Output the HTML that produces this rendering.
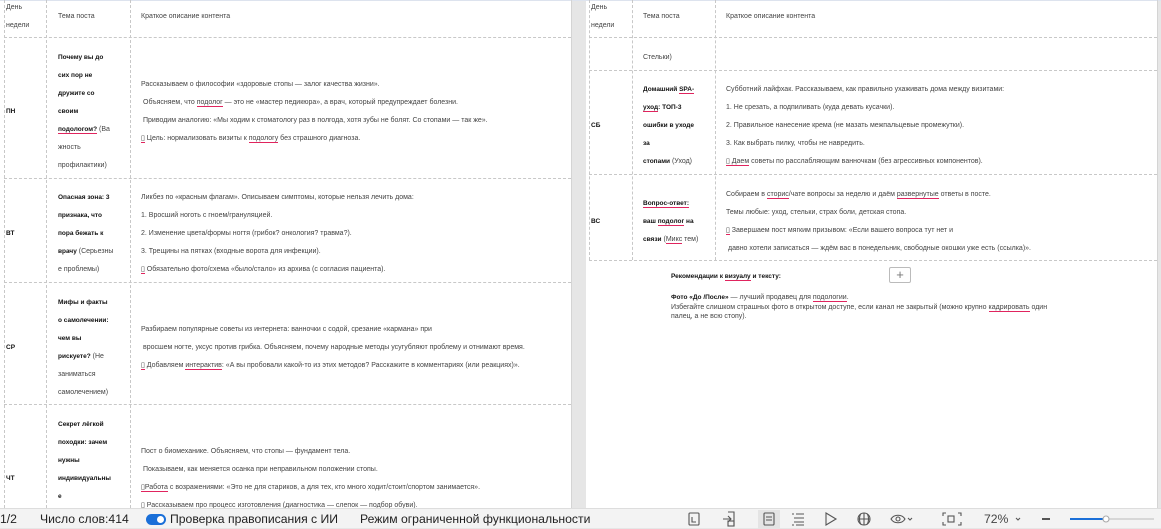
<!DOCTYPE html>
<html><head><meta charset="utf-8"><style>
*{margin:0;padding:0;box-sizing:border-box}
body{width:1161px;height:528px;overflow:hidden;background:#e6e6e6;position:relative;font-family:"Liberation Sans","DejaVu Sans",sans-serif}
.pg{position:absolute;top:0;background:#fff}
.t{position:absolute;font-size:7px;line-height:9px;white-space:nowrap;color:#444;transform:translateY(-4px)}
.b{font-weight:bold;color:#111;font-size:6.5px}
.t b{font-size:6.5px}
.h{position:absolute;border-top:1px dashed #c8c8c8;height:0}
.v{position:absolute;border-left:1px dashed #c8c8c8;width:0}
u{text-decoration:none;border-bottom:1.5px solid #e0245e}
.sb{position:absolute;left:0;top:508px;width:1161px;height:20px;background:#f3f3f3;border-top:1px solid #ddd;font-size:12.2px;color:#222}
.sb span{position:absolute;top:3px;white-space:nowrap}
</style></head><body>
<div class="pg" style="left:0;width:571px;height:508px"></div>
<div class="pg" style="left:586px;width:571px;height:508px"></div>
<div style="position:absolute;left:0;top:0;width:1161px;height:1px;background:#dde3ee"></div>

<div class="v" style="left:4px;top:0;height:508px"></div>
<div class="v" style="left:46px;top:0;height:508px"></div>
<div class="v" style="left:130px;top:0;height:508px"></div>
<div class="v" style="left:571px;top:0;height:508px;border-left:1px solid #d4d4d4"></div>
<div class="h" style="left:4px;top:37px;width:567px"></div>
<div class="h" style="left:4px;top:178px;width:567px"></div>
<div class="h" style="left:4px;top:282px;width:567px"></div>
<div class="h" style="left:4px;top:404px;width:567px"></div>

<div class="t" style="left:6px;top:7px">День</div>
<div class="t" style="left:6px;top:25px">недели</div>
<div class="t" style="left:58px;top:16px">Тема поста</div>
<div class="t" style="left:141px;top:16px">Краткое описание контента</div>

<div class="t b" style="left:6px;top:111px">ПН</div>
<div class="t b" style="left:58px;top:57px">Почему вы до</div>
<div class="t b" style="left:58px;top:75px">сих пор не</div>
<div class="t b" style="left:58px;top:93px">дружите со</div>
<div class="t b" style="left:58px;top:111px">своим</div>
<div class="t" style="left:58px;top:129px"><b style="color:#111"><u>подологом?</u></b> (Ва</div>
<div class="t" style="left:58px;top:147px">жность</div>
<div class="t" style="left:58px;top:165px">профилактики)</div>
<div class="t" style="left:141px;top:84px">Рассказываем о философии «здоровые стопы — залог качества жизни».</div>
<div class="t" style="left:143px;top:102px">Объясняем, что <u>подолог</u> — это не «мастер педикюра», а врач, который предупреждает болезни.</div>
<div class="t" style="left:143px;top:120px">Приводим аналогию: «Мы ходим к стоматологу раз в полгода, хотя зубы не болят. Со стопами — так же».</div>
<div class="t" style="left:141px;top:138px"><u>▯</u> Цель: нормализовать визиты к <u>подологу</u> без страшного диагноза.</div>

<div class="t b" style="left:6px;top:233px">ВТ</div>
<div class="t b" style="left:58px;top:197px">Опасная зона: 3</div>
<div class="t b" style="left:58px;top:215px">признака, что</div>
<div class="t b" style="left:58px;top:233px">пора бежать к</div>
<div class="t" style="left:58px;top:251px"><b style="color:#111">врачу</b> (Серьезны</div>
<div class="t" style="left:58px;top:269px">е проблемы)</div>
<div class="t" style="left:141px;top:197px">Ликбез по «красным флагам». Описываем симптомы, которые нельзя лечить дома:</div>
<div class="t" style="left:141px;top:215px">1. Вросший ноготь с гноем/грануляцией.</div>
<div class="t" style="left:141px;top:233px">2. Изменение цвета/формы ногтя (грибок? онкология? травма?).</div>
<div class="t" style="left:141px;top:251px">3. Трещины на пятках (входные ворота для инфекции).</div>
<div class="t" style="left:141px;top:269px"><u>▯</u> Обязательно фото/схема «было/стало» из архива (с согласия пациента).</div>

<div class="t b" style="left:6px;top:347px">СР</div>
<div class="t b" style="left:58px;top:302px">Мифы и факты</div>
<div class="t b" style="left:58px;top:320px">о самолечении:</div>
<div class="t b" style="left:58px;top:338px">чем вы</div>
<div class="t" style="left:58px;top:356px"><b style="color:#111">рискуете?</b> (Не</div>
<div class="t" style="left:58px;top:374px">заниматься</div>
<div class="t" style="left:58px;top:392px">самолечением)</div>
<div class="t" style="left:141px;top:329px">Разбираем популярные советы из интернета: ванночки с содой, срезание «кармана» при</div>
<div class="t" style="left:143px;top:347px">вросшем ногте, уксус против грибка. Объясняем, почему народные методы усугубляют проблему и отнимают время.</div>
<div class="t" style="left:141px;top:365px"><u>▯</u> Добавляем <u>интерактив</u>: «А вы пробовали какой-то из этих методов? Расскажите в комментариях (или реакциях)».</div>

<div class="t b" style="left:6px;top:478px">ЧТ</div>
<div class="t b" style="left:58px;top:424px">Секрет лёгкой</div>
<div class="t b" style="left:58px;top:442px">походки: зачем</div>
<div class="t b" style="left:58px;top:460px">нужны</div>
<div class="t b" style="left:58px;top:478px">индивидуальны</div>
<div class="t b" style="left:58px;top:496px">е</div>
<div class="t" style="left:141px;top:451px">Пост о биомеханике. Объясняем, что стопы — фундамент тела.</div>
<div class="t" style="left:143px;top:469px">Показываем, как меняется осанка при неправильном положении стопы.</div>
<div class="t" style="left:141px;top:487px"><u>▯Работа</u> с возражениями: «Это не для стариков, а для тех, кто много ходит/стоит/спортом занимается».</div>
<div class="t" style="left:141px;top:505px">▯ Рассказываем про процесс изготовления (диагностика — слепок — подбор обуви).</div>

<div class="v" style="left:589px;top:0;height:260px"></div>
<div class="v" style="left:632px;top:0;height:260px"></div>
<div class="v" style="left:715px;top:0;height:260px"></div>
<div class="v" style="left:1157px;top:0;height:508px;border-left:1px solid #d4d4d4"></div>
<div class="h" style="left:589px;top:37px;width:568px"></div>
<div class="h" style="left:589px;top:70px;width:568px"></div>
<div class="h" style="left:589px;top:174px;width:568px"></div>
<div class="h" style="left:589px;top:260px;width:568px"></div>

<div class="t" style="left:591px;top:7px">День</div>
<div class="t" style="left:591px;top:25px">недели</div>
<div class="t" style="left:643px;top:16px">Тема поста</div>
<div class="t" style="left:726px;top:16px">Краткое описание контента</div>
<div class="t" style="left:643px;top:57px">Стельки)</div>

<div class="t b" style="left:591px;top:125px">СБ</div>
<div class="t b" style="left:643px;top:89px">Домашний <u>SPA-</u></div>
<div class="t b" style="left:643px;top:107px"><u>уход</u>: ТОП-3</div>
<div class="t b" style="left:643px;top:125px">ошибки в уходе</div>
<div class="t b" style="left:643px;top:143px">за</div>
<div class="t" style="left:643px;top:161px"><b style="color:#111">стопами</b> (Уход)</div>
<div class="t" style="left:726px;top:89px">Субботний лайфхак. Рассказываем, как правильно ухаживать дома между визитами:</div>
<div class="t" style="left:726px;top:107px">1. Не срезать, а подпиливать (куда девать кусачки).</div>
<div class="t" style="left:726px;top:125px">2. Правильное нанесение крема (не мазать межпальцевые промежутки).</div>
<div class="t" style="left:726px;top:143px">3. Как выбрать пилку, чтобы не навредить.</div>
<div class="t" style="left:726px;top:161px"><u>▯ Даем</u> советы по расслабляющим ванночкам (без агрессивных компонентов).</div>

<div class="t b" style="left:591px;top:221px">ВС</div>
<div class="t b" style="left:643px;top:203px"><u>Вопрос-ответ:</u></div>
<div class="t b" style="left:643px;top:221px">ваш <u>подолог</u> на</div>
<div class="t" style="left:643px;top:239px"><b style="color:#111">связи</b> (<u>Микс</u> тем)</div>
<div class="t" style="left:726px;top:194px">Собираем в <u>сторис</u>/чате вопросы за неделю и даём <u>развернутые</u> ответы в посте.</div>
<div class="t" style="left:726px;top:212px">Темы любые: уход, стельки, страх боли, детская стопа.</div>
<div class="t" style="left:726px;top:230px"><u>▯</u> Завершаем пост мягким призывом: «Если вашего вопроса тут нет и</div>
<div class="t" style="left:728px;top:248px">давно хотели записаться — ждём вас в понедельник, свободные окошки уже есть (ссылка)».</div>

<div class="t b" style="left:671px;top:276px">Рекомендации к <u>визуалу</u> и тексту:</div>
<div style="position:absolute;left:889px;top:267px;width:22px;height:16px;border:1px solid #bbb;border-radius:2px;background:#fff;font-size:13px;line-height:13px;text-align:center;color:#777">+</div>
<div class="t" style="left:671px;top:297px"><b style="color:#111">Фото «До /После»</b> — лучший продавец для <u>подологии</u>.</div>
<div class="t" style="left:671px;top:307px">Избегайте слишком страшных фото в открытом доступе, если канал не закрытый (можно крупно <u>кадрировать</u> один</div>
<div class="t" style="left:671px;top:316px">палец, а не всю стопу).</div>

<div class="sb">
<span style="left:0">1/2</span>
<span style="left:40px">Число слов:414</span>
<div style="position:absolute;left:146px;top:5px;width:20px;height:11px;border-radius:6px;background:#1a6fd8"><div style="position:absolute;right:2px;top:2px;width:7px;height:7px;border-radius:50%;background:#fff"></div></div>
<span style="left:170px">Проверка правописания с ИИ</span>
<span style="left:360px">Режим ограниченной функциональности</span>
<svg style="position:absolute;left:680px;top:0" width="481" height="20" viewBox="0 0 481 20" fill="none" stroke="#555" stroke-width="1.1">
<rect x="9" y="4" width="10" height="12" rx="1"/><path d="M12 8v5h4"/>
<path d="M48 3h6v14h-6M43 10h8M48 7l3 3-3 3"/><rect x="48" y="12" width="6" height="5"/>
<rect x="78" y="1" width="22" height="19" fill="#e4e4e4" stroke="none"/>
<rect x="84" y="4" width="10" height="12" rx="1"/><path d="M86 8h6M86 11h6"/>
<path d="M112 5h2M116 5h8M114 9h10M114 13h10M112 16h2M116 16h8"/>
<path d="M146 4l10 6-10 6z"/>
<circle cx="184" cy="10" r="6"/><path d="M178 10h12M184 4v12M181 4.5c-2 3-2 8 0 11M187 4.5c2 3 2 8 0 11"/>
<path d="M211 10c3-5 11-5 14 0c-3 5-11 5-14 0z"/><circle cx="218" cy="10" r="2"/><path d="M228 9l2 2 2-2"/>
<path d="M266 4h-3v3M278 4h3v3M266 16h-3v-3M278 16h3v-3"/><rect x="268" y="7" width="6" height="6"/>
<path d="M336 9l2 2 2-2"/>
<path d="M362 10h8" stroke-width="2"/>
<path d="M390 10h36" stroke="#1a6fd8" stroke-width="2"/><path d="M426 10h48" stroke="#bbb" stroke-width="1"/>
<circle cx="426" cy="10" r="3" fill="#fff" stroke="#aaa"/>
</svg>
<span style="left:984px;color:#444">72%</span>
</div>
</body></html>
